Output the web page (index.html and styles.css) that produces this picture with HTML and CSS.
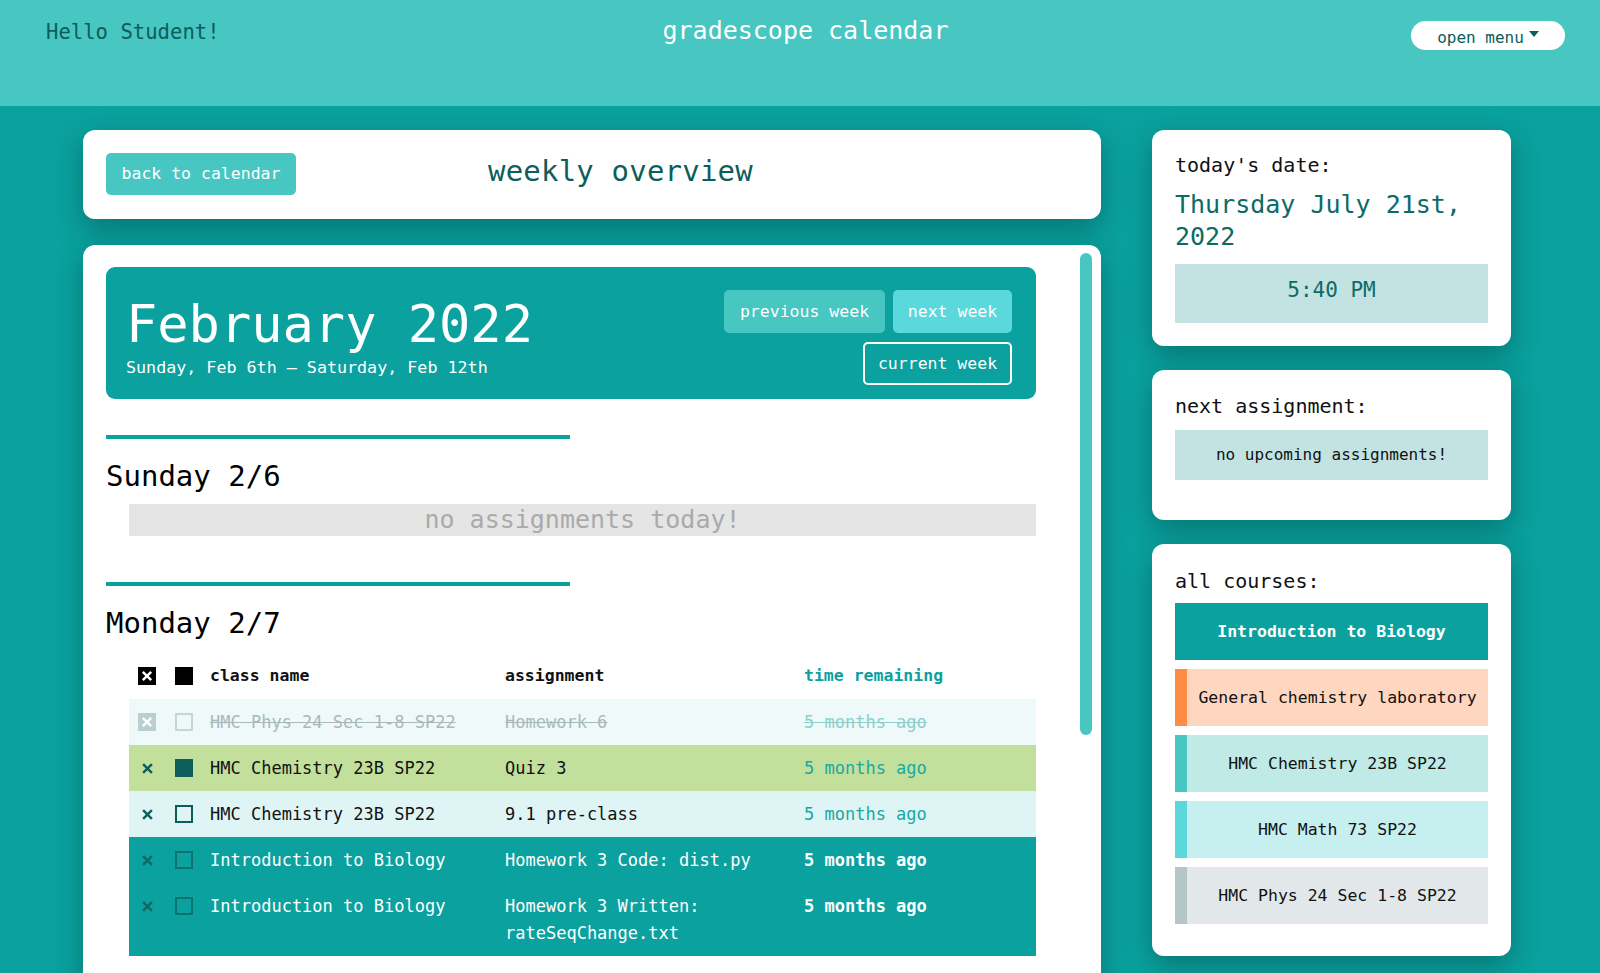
FILE: index.html
```html
<!DOCTYPE html>
<html>
<head>
<meta charset="utf-8">
<link rel="stylesheet" href="styles.css">
</head>
<body>
<header class="topbar">
  <div class="hello">Hello Student!</div>
  <div class="brand">gradescope calendar</div>
  <div class="menu-wrap"><button class="menu-btn">open menu<span class="caret"></span></button></div>
</header>
<main class="layout">
  <section class="left-col">
    <div class="card title-card">
      <button class="back-btn">back to calendar</button>
      <h1 class="page-title">weekly overview</h1>
    </div>
    <div class="card week-card">
      <div class="scroll-thumb"></div>
      <div class="banner">
        <div class="banner-text">
          <div class="month">February 2022</div>
          <div class="range">Sunday, Feb 6th – Saturday, Feb 12th</div>
        </div>
        <div class="banner-btns">
          <div class="btn-row">
            <button class="nav-btn prev">previous week</button>
            <button class="nav-btn next">next week</button>
          </div>
          <button class="nav-btn current">current week</button>
        </div>
      </div>

      <div class="day">
        <div class="divider"></div>
        <h2 class="day-title">Sunday 2/6</h2>
        <div class="empty">no assignments today!</div>
      </div>

      <div class="day">
        <div class="divider"></div>
        <h2 class="day-title">Monday 2/7</h2>
        <div class="table">
          <div class="trow thead">
            <span class="c-x"><span class="xbox dark"><svg class="xi" viewBox="0 0 10 10"><path d="M1.5 1.5L8.5 8.5M8.5 1.5L1.5 8.5"/></svg></span></span>
            <span class="c-box"><span class="sq filled-black"></span></span>
            <span class="c-class">class name</span>
            <span class="c-asg">assignment</span>
            <span class="c-time">time remaining</span>
          </div>
          <div class="trow done">
            <span class="c-x"><span class="xbox faded"><svg class="xi" viewBox="0 0 10 10"><path d="M1.5 1.5L8.5 8.5M8.5 1.5L1.5 8.5"/></svg></span></span>
            <span class="c-box"><span class="sq faded-box"></span></span>
            <span class="c-class">HMC Phys 24 Sec 1-8 SP22</span>
            <span class="c-asg">Homework 6</span>
            <span class="c-time">5 months ago</span>
          </div>
          <div class="trow green">
            <span class="c-x"><svg class="xm" viewBox="0 0 10 10"><path d="M1 1L9 9M9 1L1 9"/></svg></span>
            <span class="c-box"><span class="sq filled-teal"></span></span>
            <span class="c-class">HMC Chemistry 23B SP22</span>
            <span class="c-asg">Quiz 3</span>
            <span class="c-time">5 months ago</span>
          </div>
          <div class="trow light">
            <span class="c-x"><svg class="xm" viewBox="0 0 10 10"><path d="M1 1L9 9M9 1L1 9"/></svg></span>
            <span class="c-box"><span class="sq outline"></span></span>
            <span class="c-class">HMC Chemistry 23B SP22</span>
            <span class="c-asg">9.1 pre-class</span>
            <span class="c-time">5 months ago</span>
          </div>
          <div class="trow bio">
            <span class="c-x"><svg class="xm dim" viewBox="0 0 10 10"><path d="M1 1L9 9M9 1L1 9"/></svg></span>
            <span class="c-box"><span class="sq outline dimbox"></span></span>
            <span class="c-class">Introduction to Biology</span>
            <span class="c-asg">Homework 3 Code: dist.py</span>
            <span class="c-time">5 months ago</span>
          </div>
          <div class="trow bio">
            <span class="c-x"><svg class="xm dim" viewBox="0 0 10 10"><path d="M1 1L9 9M9 1L1 9"/></svg></span>
            <span class="c-box"><span class="sq outline dimbox"></span></span>
            <span class="c-class">Introduction to Biology</span>
            <span class="c-asg">Homework 3 Written: rateSeqChange.txt</span>
            <span class="c-time">5 months ago</span>
          </div>
        </div>
      </div>
    </div>
  </section>

  <aside class="right-col">
    <div class="card side-card date-card">
      <div class="label">today's date:</div>
      <div class="today">Thursday July 21st, 2022</div>
      <div class="info-box time">5:40 PM</div>
    </div>
    <div class="card side-card next-card">
      <div class="label">next assignment:</div>
      <div class="info-box upcoming">no upcoming assignments!</div>
    </div>
    <div class="card side-card courses-card">
      <div class="label">all courses:</div>
      <div class="courses">
        <div class="course bio-c"><span class="cname">Introduction to Biology</span></div>
        <div class="course chem-lab"><span class="bar"></span><span class="cname">General chemistry laboratory</span></div>
        <div class="course chem"><span class="bar"></span><span class="cname">HMC Chemistry 23B SP22</span></div>
        <div class="course math"><span class="bar"></span><span class="cname">HMC Math 73 SP22</span></div>
        <div class="course phys"><span class="bar"></span><span class="cname">HMC Phys 24 Sec 1-8 SP22</span></div>
      </div>
    </div>
  </aside>
</main>
</body>
</html>
```

FILE: styles.css
```css
* { box-sizing: border-box; }
html, body {
  margin: 0;
  height: 973px;
  overflow: hidden;
}
body {
  background: #0aa19e;
  font-family: "DejaVu Sans Mono", "Liberation Mono", monospace;
  color: #111;
}
button { font-family: inherit; cursor: pointer; }

.topbar {
  height: 106px;
  background: #47c6c2;
  display: grid;
  grid-template-columns: 1fr auto 1fr;
  align-items: start;
  padding: 0 35px 0 46px;
}
.hello {
  color: #0d5e5a;
  font-size: 20.6px;
  line-height: 24px;
  margin-top: 20px;
}
.brand {
  color: #fff;
  font-size: 25px;
  line-height: 30px;
  margin-top: 16px;
}
.menu-wrap { display: flex; justify-content: flex-end; }
.menu-btn {
  margin-top: 21px;
  height: 29px;
  width: 154px;
  border: none;
  background: #fff;
  border-radius: 15px;
  color: #0d5e5a;
  font-size: 16px;
  display: flex;
  align-items: center;
  justify-content: center;
  gap: 5px;
  padding: 3px 0 0 0;
}
.caret {
  width: 0; height: 0;
  border-left: 5px solid transparent;
  border-right: 5px solid transparent;
  border-top: 6px solid #0d5e5a;
  margin-top: -6px;
}

.layout {
  display: flex;
  gap: 51px;
  padding: 24px 0 0 83px;
  align-items: flex-start;
}
.left-col {
  width: 1018px;
  display: flex;
  flex-direction: column;
  gap: 26px;
}
.card {
  background: #fff;
  border-radius: 12px;
  box-shadow: 0 10px 28px rgba(0, 50, 48, 0.38);
}
.title-card {
  height: 89px;
  display: flex;
  align-items: center;
  padding: 0 23px;
}
.back-btn {
  height: 42px;
  width: 190px;
  background: #47c6c2;
  color: #fff;
  border: none;
  border-radius: 5px;
  font-size: 16.5px;
  margin-bottom: 2px;
  padding: 0;
}
.page-title {
  margin: 0 0 8px 192px;
  font-weight: normal;
  font-size: 29px;
  color: #0d5e5a;
  letter-spacing: 0.2px;
}

.week-card {
  position: relative;
  height: 760px;
  padding: 22px 65px 0 23px;
  overflow: hidden;
}
.scroll-thumb {
  position: absolute;
  right: 9px;
  top: 8px;
  width: 12px;
  height: 482px;
  background: #47c6c2;
  border-radius: 6px;
}
.banner {
  background: #0aa19f;
  border-radius: 9px;
  height: 132px;
  display: flex;
  justify-content: space-between;
  padding: 23px 24px 0 20px;
}
.banner-text { color: #fff; padding-top: 3px; }
.month {
  font-size: 52px;
  line-height: 62px;
}
.range {
  font-size: 16.7px;
  line-height: 20px;
  margin-top: 2px;
}
.banner-btns {
  display: flex;
  flex-direction: column;
  align-items: flex-end;
  gap: 9px;
}
.btn-row { display: flex; gap: 8px; }
.nav-btn {
  height: 43px;
  border: none;
  border-radius: 5px;
  color: #fff;
  font-size: 16.5px;
  padding: 0;
  white-space: nowrap;
}
.prev { background: #47c6c2; width: 161px; }
.next { background: #5ad8dc; width: 119px; }
.current {
  background: transparent;
  border: 2px solid #fff;
  width: 149px;
}

.day { margin-top: 36px; }
.day + .day { margin-top: 46px; }
.divider {
  width: 464px;
  height: 4px;
  background: #0aa19f;
}
.day-title {
  margin: 19px 0 0 0;
  font-size: 29px;
  line-height: 36px;
  font-weight: normal;
  color: #000;
}
.empty {
  margin: 10px 0 0 23px;
  height: 32px;
  background: #e5e5e5;
  color: #aaa;
  font-size: 25px;
  line-height: 32px;
  text-align: center;
}

.table { margin: 21px 0 0 23px; }
.trow {
  display: grid;
  grid-template-columns: 37px 35px 295px 299px 1fr;
  align-items: start;
  padding: 9.5px 0 9.5px 9px;
  font-size: 17px;
  line-height: 27px;
  color: #111;
}
.thead {
  padding: 0 0 10px 9px;
  font-weight: bold;
  font-size: 16.5px;
}
.thead .c-time { color: #0aa19f; }
.c-x, .c-box { display: flex; align-items: center; height: 27px; }
.xbox {
  width: 18px; height: 18px;
  display: flex; align-items: center; justify-content: center;
}
.xi { width: 12px; height: 12px; }
.xi path { stroke: #fff; stroke-width: 2; fill: none; }
.xbox.dark { background: #000; }
.xbox.faded { background: #b9cfd0; }
.xm { width: 11px; height: 11px; margin-left: 4px; }
.xm path { stroke: #0d5e5a; stroke-width: 2.2; fill: none; }
.xm.dim path { stroke: #0c6a66; }
.sq { width: 18px; height: 18px; display: block; }
.filled-black { background: #000; }
.filled-teal { background: #0d5e5a; }
.faded-box { border: 2px solid #c3d6d7; }
.outline { border: 2px solid #0d5e5a; }
.dimbox { border-color: #0b7470; }

.done { background: #eff9f9; color: #a9b9ba; }
.done .c-class, .done .c-asg, .done .c-time { text-decoration: line-through; }
.done .c-time { color: #8ccfcd; }
.green { background: #c2e09c; }
.green .c-time, .light .c-time { color: #18a9a4; }
.light { background: #dff4f4; }
.bio { background: #0aa19f; color: #fff; }
.bio .c-time { font-weight: bold; }

.right-col {
  width: 359px;
  display: flex;
  flex-direction: column;
  gap: 24px;
}
.side-card { padding: 23px 23px 23px 23px; }
.label {
  font-size: 20px;
  line-height: 24px;
  color: #111;
}
.today {
  margin-top: 12px;
  font-size: 25px;
  line-height: 32px;
  color: #0d6b66;
}
.info-box {
  background: #c3e3e2;
  text-align: center;
}
.time {
  margin-top: 11px;
  height: 59px;
  line-height: 53px;
  font-size: 21px;
  color: #0d6b66;
}
.next-card { padding: 24px 23px 40px 23px; }
.upcoming {
  margin-top: 12px;
  height: 50px;
  line-height: 50px;
  font-size: 16px;
  color: #111;
}
.courses-card { padding: 25px 23px 32px 23px; }
.courses {
  margin-top: 10px;
  display: flex;
  flex-direction: column;
  gap: 9px;
}
.course {
  height: 57px;
  display: flex;
  align-items: center;
  font-size: 16.5px;
  color: #111;
}
.course .bar { width: 12px; align-self: stretch; }
.course .cname { flex: 1; text-align: center; white-space: nowrap; }
.bio-c { background: #0aa19f; color: #fff; font-weight: bold; }
.chem-lab { background: #ffd6bf; }
.chem-lab .bar { background: #ff8c45; }
.chem { background: #c0eae6; }
.chem .bar { background: #47c6c2; }
.math { background: #c6eff0; }
.math .bar { background: #5ad8dc; }
.phys { background: #e2e8e9; }
.phys .bar { background: #b5c6c6; }
```
